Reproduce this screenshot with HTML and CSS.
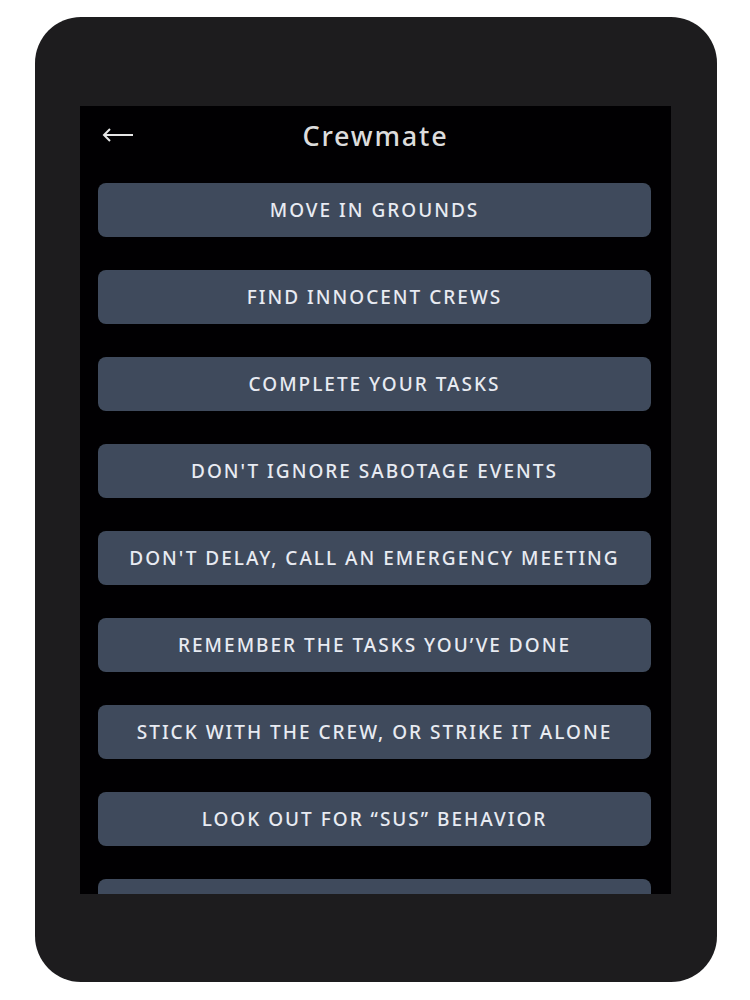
FILE: index.html
```html
<!DOCTYPE html>
<html>
<head>
<meta charset="utf-8">
<link rel="stylesheet" href="styles.css">
</head>
<body>
<div class="device">
  <div class="screen">
    <div class="header">
      <svg class="back" width="32" height="14" viewBox="0 0 32 14"><path d="M31 7H2M8 1L2 7l6 6" fill="none" stroke="#e6e6e6" stroke-width="2"/></svg>
      <div class="title">Crewmate</div>
    </div>
    <div class="list">
      <div class="btn">MOVE IN GROUNDS</div>
      <div class="btn">FIND INNOCENT CREWS</div>
      <div class="btn">COMPLETE YOUR TASKS</div>
      <div class="btn">DON'T IGNORE SABOTAGE EVENTS</div>
      <div class="btn">DON'T DELAY, CALL AN EMERGENCY MEETING</div>
      <div class="btn">REMEMBER THE TASKS YOU’VE DONE</div>
      <div class="btn">STICK WITH THE CREW, OR STRIKE IT ALONE</div>
      <div class="btn">LOOK OUT FOR “SUS” BEHAVIOR</div>
      <div class="btn"></div>
    </div>
  </div>
</div>
</body>
</html>
```
FILE: styles.css
```css
html, body { margin: 0; padding: 0; background: #ffffff; }
body { width: 750px; height: 1000px; font-family: "Noto Sans", "DejaVu Sans", sans-serif; }
.device {
  margin: 17px 0 0 35px;
  width: 682px;
  height: 965px;
  background: #1d1c1e;
  border-radius: 46px;
  box-sizing: border-box;
  padding: 89px 0 0 45px;
}
.screen {
  width: 591px;
  height: 788px;
  background: #010002;
  overflow: hidden;
}
.header {
  position: relative;
  height: 58px;
  display: flex;
  align-items: center;
  justify-content: center;
}
.back { position: absolute; left: 22px; top: 22px; }
.title {
  color: #dcdcdc;
  font-size: 27px;
  font-weight: 500;
  letter-spacing: 1.8px;
  margin-top: 1px;
}
.list {
  padding: 19px 20px 0 18px;
  display: flex;
  flex-direction: column;
  gap: 33px;
}
.btn {
  height: 54px;
  flex: none;
  background: #3f4a5c;
  border-radius: 8px;
  color: #e8ebf2;
  font-size: 19px;
  font-weight: 500;
  letter-spacing: 2px;
  display: flex;
  align-items: center;
  justify-content: center;
}
```
